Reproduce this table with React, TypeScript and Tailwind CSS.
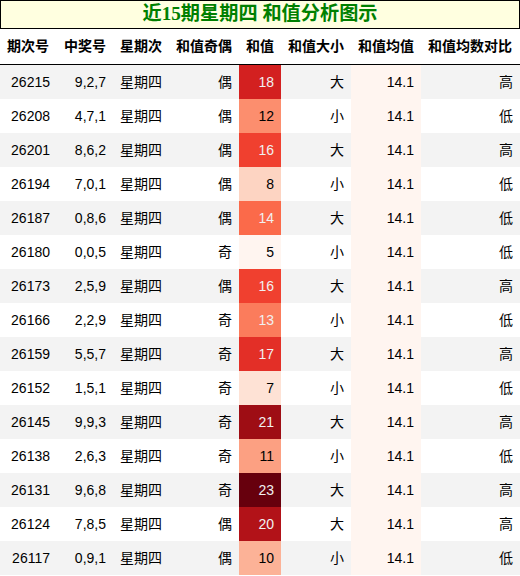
import React from "react";

const rows: [string, string, string, string, number, string, string, string][] = [
  ["26215", "9,2,7", "星期四", "偶", 18, "大", "14.1", "高"],
  ["26208", "4,7,1", "星期四", "偶", 12, "小", "14.1", "低"],
  ["26201", "8,6,2", "星期四", "偶", 16, "大", "14.1", "高"],
  ["26194", "7,0,1", "星期四", "偶", 8, "小", "14.1", "低"],
  ["26187", "0,8,6", "星期四", "偶", 14, "大", "14.1", "低"],
  ["26180", "0,0,5", "星期四", "奇", 5, "小", "14.1", "低"],
  ["26173", "2,5,9", "星期四", "偶", 16, "大", "14.1", "高"],
  ["26166", "2,2,9", "星期四", "奇", 13, "小", "14.1", "低"],
  ["26159", "5,5,7", "星期四", "奇", 17, "大", "14.1", "高"],
  ["26152", "1,5,1", "星期四", "奇", 7, "小", "14.1", "低"],
  ["26145", "9,9,3", "星期四", "奇", 21, "大", "14.1", "高"],
  ["26138", "2,6,3", "星期四", "奇", 11, "小", "14.1", "低"],
  ["26131", "9,6,8", "星期四", "奇", 23, "大", "14.1", "高"],
  ["26124", "7,8,5", "星期四", "偶", 20, "大", "14.1", "高"],
  ["26117", "0,9,1", "星期四", "偶", 10, "小", "14.1", "低"],
];

const heat: Record<number, [string, boolean]> = {
  5: ["#fff5f0", false],
  7: ["#fee2d5", false],
  8: ["#fdd4c2", false],
  10: ["#fcb297", false],
  11: ["#fca082", false],
  12: ["#fc8e6e", false],
  13: ["#fb7c5c", true],
  14: ["#fb6a4a", true],
  16: ["#f0402f", true],
  17: ["#e32f27", true],
  18: ["#d32020", true],
  20: ["#b21218", true],
  21: ["#9e0d14", true],
  23: ["#67000d", true],
};

const headers = ["期次号", "中奖号", "星期次", "和值奇偶", "和值", "和值大小", "和值均值", "和值均数对比"];

const grid = "grid grid-cols-[57px_56px_56px_70px_42px_70px_70px_99px]";

export default function App() {
  return (
    <div
      className="w-[520px] h-[576px] bg-white text-black overflow-hidden"
      style={{ fontFamily: '"Liberation Sans", "Noto Sans CJK SC", sans-serif' }}
    >
      <div
        className="h-[29px] border border-black bg-[#ffffe0] flex items-center justify-center text-[19.2px] font-bold text-[#008000]"
        style={{ fontFamily: '"Liberation Serif", "Noto Sans CJK SC", serif' }}
      >
        近15期星期四 和值分析图示
      </div>
      <div className={`${grid} h-[36px] border-b border-black text-[14px] font-bold`}>
        {headers.map((h) => (
          <div key={h} className="flex items-center px-[7px] whitespace-nowrap">
            {h}
          </div>
        ))}
      </div>
      {rows.map((r, i) => {
        const [bg, light] = heat[r[4]];
        return (
          <div
            key={r[0]}
            className={`${grid} h-[34px] text-[14px] ${i % 2 === 0 ? "bg-[#f3f3f3]" : "bg-white"}`}
          >
            <div className="flex items-center justify-end px-[7px]">{r[0]}</div>
            <div className="flex items-center justify-end px-[7px]">{r[1]}</div>
            <div className="flex items-center justify-start px-[7px]">{r[2]}</div>
            <div className="flex items-center justify-end px-[7px]">{r[3]}</div>
            <div
              className={`flex items-center justify-end px-[7px] ${light ? "text-[#f1f1f1]" : "text-black"}`}
              style={{ backgroundColor: bg }}
            >
              {r[4]}
            </div>
            <div className="flex items-center justify-end px-[7px]">{r[5]}</div>
            <div className="flex items-center justify-end px-[7px] bg-[#fff5f0]">{r[6]}</div>
            <div className="flex items-center justify-end px-[7px]">{r[7]}</div>
          </div>
        );
      })}
    </div>
  );
}
